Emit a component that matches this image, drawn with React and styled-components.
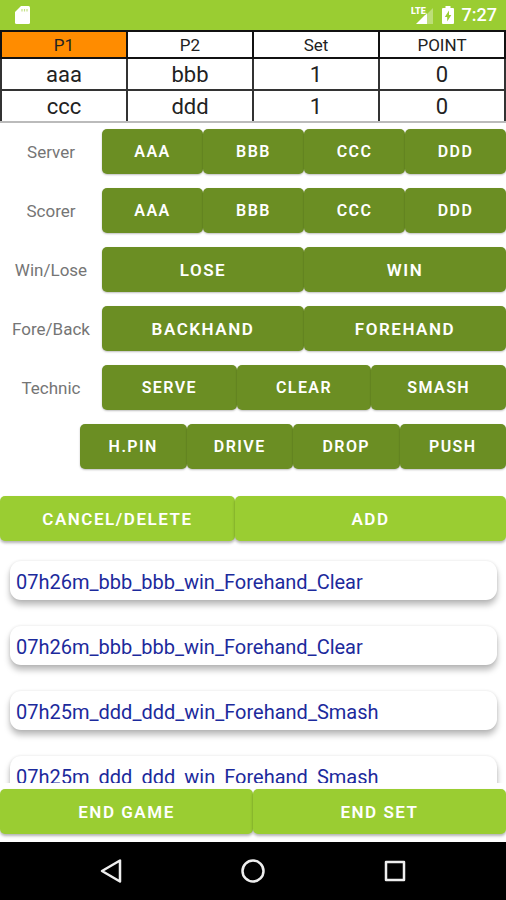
import React from 'react';
import styled, { createGlobalStyle } from 'styled-components';

const GlobalStyle = createGlobalStyle`
  * {
    box-sizing: border-box;
  }
  body {
    margin: 0;
    background: #fff;
    font-family: Roboto, sans-serif;
  }
`;
const Screen = styled.div`
  height: 100vh;
  display: flex;
  flex-direction: column;
`;
const StatusBar = styled.header`
  flex: none;
  height: 30px;
  padding: 0 9px 0 15px;
  display: flex;
  align-items: center;
  gap: 8px;
  background: #9acd32;
  color: #fff;
  & svg:first-child {
    margin-right: auto;
  }
`;
const Clock = styled.span`
  font-size: 18px;
  line-height: 20px;
  font-weight: 500;
`;
const ScoreTable = styled.table`
  flex: none;
  width: 100%;
  table-layout: fixed;
  border-collapse: collapse;
  color: #222;
  & tbody tr:last-child td {
    border-bottom-color: #bbb;
  }
`;
const HeadCell = styled.th`
  height: 27px;
  padding: 0;
  border: 2px solid #111;
  background: ${(props) => (props.$active ? '#ff8c00' : '#fff')};
  font-size: 17px;
  line-height: 20px;
  font-weight: 400;
`;
const Cell = styled.td`
  height: 32px;
  padding: 2px 0 0;
  border: 2px solid #333;
  font-size: 22px;
  line-height: 24px;
  text-align: center;
`;
const Choices = styled.main`
  flex: none;
  padding-top: 6px;
  display: flex;
  flex-direction: column;
  gap: 14px;
`;
const ChoiceRow = styled.div`
  display: grid;
  grid-template-columns: ${(props) => (props.$wide ? '80px' : '102px')} 1fr;
  align-items: center;
`;
const ChoiceLabel = styled.span`
  color: #757575;
  font-size: 17px;
  line-height: 20px;
  text-align: center;
`;
const ButtonGroup = styled.div`
  flex: none;
  display: flex;
`;
const Button = styled.button`
  flex: ${(props) => props.$grow || 1} 1 0;
  min-width: 0;
  height: 45px;
  padding: 0;
  border: 0;
  border-radius: 5px;
  background: #6b8e23;
  box-shadow: 0 1px 2px rgba(0, 0, 0, 0.25);
  color: #fff;
  font-family: inherit;
  font-size: ${(props) => (props.$compact ? '16px' : '17px')};
  font-weight: 600;
  letter-spacing: 0.09em;
  text-transform: uppercase;
  cursor: pointer;
`;
const ActionButton = styled(Button)`
  background: #9acd32;
  box-shadow: 0 2px 3px rgba(0, 0, 0, 0.3);
`;
const Actions = styled(ButtonGroup)`
  margin-top: 27px;
`;
const History = styled.ul`
  flex: 1;
  min-height: 0;
  margin: 8px 0 6px;
  padding: 12px 9px 0 10px;
  overflow: hidden;
  list-style: none;
`;
const HistoryItem = styled.li`
  height: 39px;
  margin-bottom: 26px;
  padding: 1px 6px 0;
  border-radius: 11px;
  background: #fff;
  box-shadow: 0 5px 6px rgba(0, 0, 0, 0.27), 0 0 3px rgba(0, 0, 0, 0.1);
  color: #1c2a9c;
  font-size: 20px;
  line-height: 40px;
  white-space: nowrap;
`;
const Footer = styled(ButtonGroup)`
  padding-bottom: 8px;
`;
const NavBar = styled.nav`
  flex: none;
  height: 58px;
  padding: 0 8%;
  display: grid;
  grid-template-columns: repeat(3, 1fr);
  background: #000;
`;
const NavButton = styled.button`
  padding: 0;
  border: 0;
  background: none;
  color: #eee;
  display: flex;
  align-items: center;
  justify-content: center;
  & svg {
    fill: none;
    stroke: currentColor;
    stroke-width: 2.5;
    stroke-linejoin: round;
  }
`;

const players = ['aaa', 'bbb', 'ccc', 'ddd'];

const choices = [
  { label: 'Server', options: players },
  { label: 'Scorer', options: players },
  { label: 'Win/Lose', options: ['Lose', 'Win'] },
  { label: 'Fore/Back', options: ['Backhand', 'Forehand'] },
  { label: 'Technic', options: ['Serve', 'Clear', 'Smash'] },
  { label: '', options: ['H.Pin', 'Drive', 'Drop', 'Push'] },
];

const scores = [
  ['aaa', 'bbb', 1, 0],
  ['ccc', 'ddd', 1, 0],
];

const history = [
  '07h26m_bbb_bbb_win_Forehand_Clear',
  '07h26m_bbb_bbb_win_Forehand_Clear',
  '07h25m_ddd_ddd_win_Forehand_Smash',
  '07h25m_ddd_ddd_win_Forehand_Smash',
];

const SdCardIcon = () => (
  <svg width="16" height="20" viewBox="0 0 16 20" aria-hidden="true">
    <path
      d="M6 1h7.500a1.500 1.500 0 0 1 1.500 1.500v15a1.500 1.500 0 0 1-1.500 1.500h-12A1.500 1.500 0 0 1 0 17.500V7z"
      fill="#fff"
    />
    <path d="M7 4v2.500M9.500 4v2.500M12 4v2.500" stroke="#c3e184" strokeWidth="1.200" />
  </svg>
);

const SignalIcon = () => (
  <svg width="23" height="20" viewBox="0 0 23 20" aria-hidden="true">
    <path d="M22 3v16H6z" fill="#fff" opacity="0.350" />
    <path d="M16 8v11H5z" fill="#fff" />
    <text x="0" y="9" fill="#fff" fontSize="9" fontWeight="900" stroke="#9acd32" strokeWidth="1" paintOrder="stroke">
      LTE
    </text>
  </svg>
);

const BatteryIcon = () => (
  <svg width="12" height="20" viewBox="0 0 12 20" aria-hidden="true">
    <path
      d="M3.500 1h5v2H11a1 1 0 0 1 1 1v14a1 1 0 0 1-1 1H1a1 1 0 0 1-1-1V4a1 1 0 0 1 1-1h2.500z"
      fill="#fff"
    />
    <path d="M7 5.500L2.800 12H5.200v4.500L9.300 10H7z" fill="#9acd32" />
  </svg>
);

class App extends React.Component {
  render() {
    return (
      <Screen>
        <GlobalStyle />
        <StatusBar>
          <SdCardIcon />
          <SignalIcon />
          <BatteryIcon />
          <Clock>7:27</Clock>
        </StatusBar>
        <ScoreTable>
          <thead>
            <tr>
              <HeadCell $active>P1</HeadCell>
              <HeadCell>P2</HeadCell>
              <HeadCell>Set</HeadCell>
              <HeadCell>POINT</HeadCell>
            </tr>
          </thead>
          <tbody>
            {scores.map((row) => (
              <tr key={row[0]}>
                {row.map((value, i) => (
                  <Cell key={i}>{value}</Cell>
                ))}
              </tr>
            ))}
          </tbody>
        </ScoreTable>
        <Choices>
          {choices.map((choice) => (
            <ChoiceRow key={choice.label} $wide={!choice.label}>
              <ChoiceLabel id={`label-${choice.label}`}>{choice.label}</ChoiceLabel>
              <ButtonGroup role="group" aria-labelledby={`label-${choice.label || 'Technic'}`}>
                {choice.options.map((option) => (
                  <Button key={option} type="button" $compact={choice.options.length > 2}>
                    {option}
                  </Button>
                ))}
              </ButtonGroup>
            </ChoiceRow>
          ))}
        </Choices>
        <Actions>
          <ActionButton type="button" $grow={13}>
            Cancel/Delete
          </ActionButton>
          <ActionButton type="button" $grow={15}>
            Add
          </ActionButton>
        </Actions>
        <History>
          {history.map((entry, i) => (
            <HistoryItem key={i}>{entry}</HistoryItem>
          ))}
        </History>
        <Footer>
          <ActionButton type="button">End game</ActionButton>
          <ActionButton type="button">End set</ActionButton>
        </Footer>
        <NavBar>
          <NavButton type="button" aria-label="Back">
            <svg width="24" height="26" viewBox="0 0 24 26">
              <path d="M21 2.500v21L3 13z" />
            </svg>
          </NavButton>
          <NavButton type="button" aria-label="Home">
            <svg width="26" height="26" viewBox="0 0 26 26">
              <circle cx="13" cy="13" r="10.500" />
            </svg>
          </NavButton>
          <NavButton type="button" aria-label="Recent apps">
            <svg width="24" height="24" viewBox="0 0 24 24">
              <rect x="3" y="3" width="18" height="18" />
            </svg>
          </NavButton>
        </NavBar>
      </Screen>
    );
  }
}

export default App;
